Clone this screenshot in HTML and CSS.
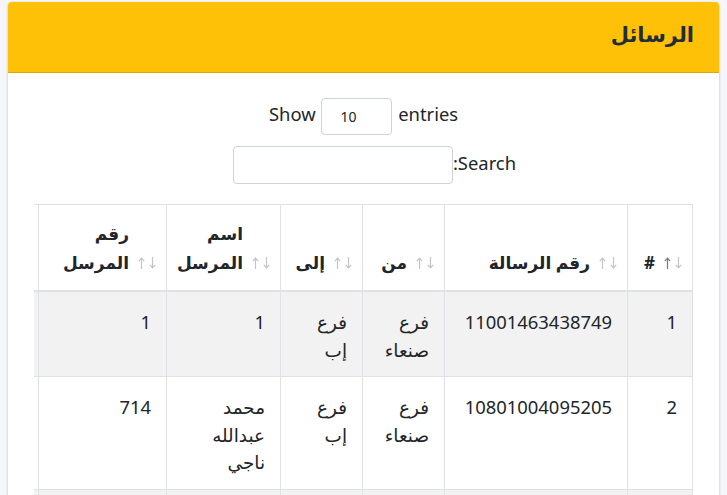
FILE: index.html
```html
<!DOCTYPE html>
<html lang="ar" dir="rtl">
<head>
<meta charset="utf-8">
<title>الرسائل</title>
<link rel="stylesheet" href="styles.css">
</head>
<body>
<div class="card">
  <div class="card-header">
    <h3 class="card-title">الرسائل</h3>
  </div>
  <div class="card-body">
    <div class="dt-length"><label>Show <span class="len-box">10</span> entries</label></div>
    <div class="dt-search"><label>Search:<span class="search-box"></span></label></div>
    <div class="table-wrap">
      <table class="dt">
        <colgroup>
          <col class="w-num"><col class="w-msg"><col class="w-from"><col class="w-to"><col class="w-name"><col class="w-snum"><col class="w-extra">
        </colgroup>
        <thead>
          <tr>
            <th><div class="th-in"><span class="sort" dir="ltr"><svg class="up active" viewBox="0 0 7 12" width="7" height="12"><path d="M3.5 12V1.2M0.8 4.2L3.5 1.2L6.2 4.2"/></svg><svg class="down" viewBox="0 0 7 12" width="7" height="12"><path d="M3.5 0V10.8M0.8 7.8L3.5 10.8L6.2 7.8"/></svg></span><span class="th-t">#</span></div></th>
            <th><div class="th-in"><span class="sort" dir="ltr"><svg class="up" viewBox="0 0 7 12" width="7" height="12"><path d="M3.5 12V1.2M0.8 4.2L3.5 1.2L6.2 4.2"/></svg><svg class="down" viewBox="0 0 7 12" width="7" height="12"><path d="M3.5 0V10.8M0.8 7.8L3.5 10.8L6.2 7.8"/></svg></span><span class="th-t">رقم الرسالة</span></div></th>
            <th><div class="th-in"><span class="sort" dir="ltr"><svg class="up" viewBox="0 0 7 12" width="7" height="12"><path d="M3.5 12V1.2M0.8 4.2L3.5 1.2L6.2 4.2"/></svg><svg class="down" viewBox="0 0 7 12" width="7" height="12"><path d="M3.5 0V10.8M0.8 7.8L3.5 10.8L6.2 7.8"/></svg></span><span class="th-t">من</span></div></th>
            <th><div class="th-in"><span class="sort" dir="ltr"><svg class="up" viewBox="0 0 7 12" width="7" height="12"><path d="M3.5 12V1.2M0.8 4.2L3.5 1.2L6.2 4.2"/></svg><svg class="down" viewBox="0 0 7 12" width="7" height="12"><path d="M3.5 0V10.8M0.8 7.8L3.5 10.8L6.2 7.8"/></svg></span><span class="th-t">إلى</span></div></th>
            <th><div class="th-in"><span class="sort" dir="ltr"><svg class="up" viewBox="0 0 7 12" width="7" height="12"><path d="M3.5 12V1.2M0.8 4.2L3.5 1.2L6.2 4.2"/></svg><svg class="down" viewBox="0 0 7 12" width="7" height="12"><path d="M3.5 0V10.8M0.8 7.8L3.5 10.8L6.2 7.8"/></svg></span><span class="th-t">اسم المرسل</span></div></th>
            <th><div class="th-in"><span class="sort" dir="ltr"><svg class="up" viewBox="0 0 7 12" width="7" height="12"><path d="M3.5 12V1.2M0.8 4.2L3.5 1.2L6.2 4.2"/></svg><svg class="down" viewBox="0 0 7 12" width="7" height="12"><path d="M3.5 0V10.8M0.8 7.8L3.5 10.8L6.2 7.8"/></svg></span><span class="th-t">رقم المرسل</span></div></th>
            <th></th>
          </tr>
        </thead>
        <tbody>
          <tr>
            <td>1</td><td>11001463438749</td><td>فرع صنعاء</td><td>فرع إب</td><td>1</td><td>1</td><td></td>
          </tr>
          <tr>
            <td>2</td><td>10801004095205</td><td>فرع صنعاء</td><td>فرع إب</td><td>محمد عبدالله ناجي</td><td>714</td><td></td>
          </tr>
          <tr>
            <td>3</td><td>10801004095206</td><td>فرع صنعاء</td><td>فرع إب</td><td>علي</td><td>715</td><td></td>
          </tr>
        </tbody>
      </table>
    </div>
  </div>
</div>
</body>
</html>
```
FILE: styles.css
```css
html, body {
  margin: 0;
}
body {
  padding: 2px 8px 40px;
  background: #f4f6f9;
  font-family: "Noto Sans", "DejaVu Sans", sans-serif;
  font-size: 18.4px;
  line-height: 1.5;
  color: #212529;
}
.card {
  background: #fff;
  border-radius: 4px;
  box-shadow: 0 0 1px rgba(0,0,0,.125), 0 1px 3px rgba(0,0,0,.2);
}
.card-header {
  background: #ffc107;
  border-bottom: 1px solid rgba(0,0,0,.125);
  border-radius: 4px 4px 0 0;
  height: 70px;
  padding: 0 25px;
  display: flex;
  align-items: center;
}
.card-title {
  margin: -4px 0 0;
  font-size: 21px;
  font-weight: 700;
  color: #1f2d3d;
  line-height: 1.2;
}
.card-body {
  padding: 25px 26px 0;
}
.dt-length, .dt-search {
  text-align: center;
}
.len-box {
  display: inline-block;
  vertical-align: middle;
  box-sizing: border-box;
  width: 71px;
  height: 37px;
  margin: 0 1px;
  border: 1px solid #ced4da;
  border-radius: 4px;
  font-size: 14px;
  line-height: 35px;
  direction: ltr;
  text-align: left;
  padding: 0 0 0 18px;
}
.dt-search {
  margin-top: 11px;
}
.search-box {
  display: inline-block;
  vertical-align: middle;
  box-sizing: border-box;
  width: 220px;
  height: 38px;
  border: 1px solid #ced4da;
  border-radius: 4px;
  margin-left: 22px;
}
.table-wrap {
  margin-top: 20px;
  overflow-x: auto;
}
.dt {
  border-collapse: collapse;
  table-layout: fixed;
  width: 774px;
}
.w-num { width: 65px; }
.w-msg { width: 183px; }
.w-from { width: 82px; }
.w-to { width: 82px; }
.w-name { width: 114px; }
.w-snum { width: 128px; }
.w-extra { width: 120px; }
.dt th, .dt td {
  border: 1px solid #dee2e6;
  text-align: right;
}
.dt th {
  vertical-align: bottom;
  padding: 14px 10px 13px 14px;
  font-size: 17px;
  line-height: 29px;
  font-weight: 700;
  border-bottom: 2px solid #dee2e6;
}
.dt td {
  vertical-align: top;
  padding: 16px 15px 13px 14px;
}
.dt tbody tr:nth-child(odd) {
  background: #f2f2f2;
}
.th-in {
  display: flex;
  align-items: flex-end;
  gap: 9px;
}
.sort {
  display: inline-flex;
  gap: 4px;
  flex: none;
  padding-bottom: 8px;
}
.sort svg {
  fill: none;
  stroke: #c4c4c4;
  stroke-width: 1.2;
}
.sort svg.active {
  stroke: #7a7a7a;
}
```
